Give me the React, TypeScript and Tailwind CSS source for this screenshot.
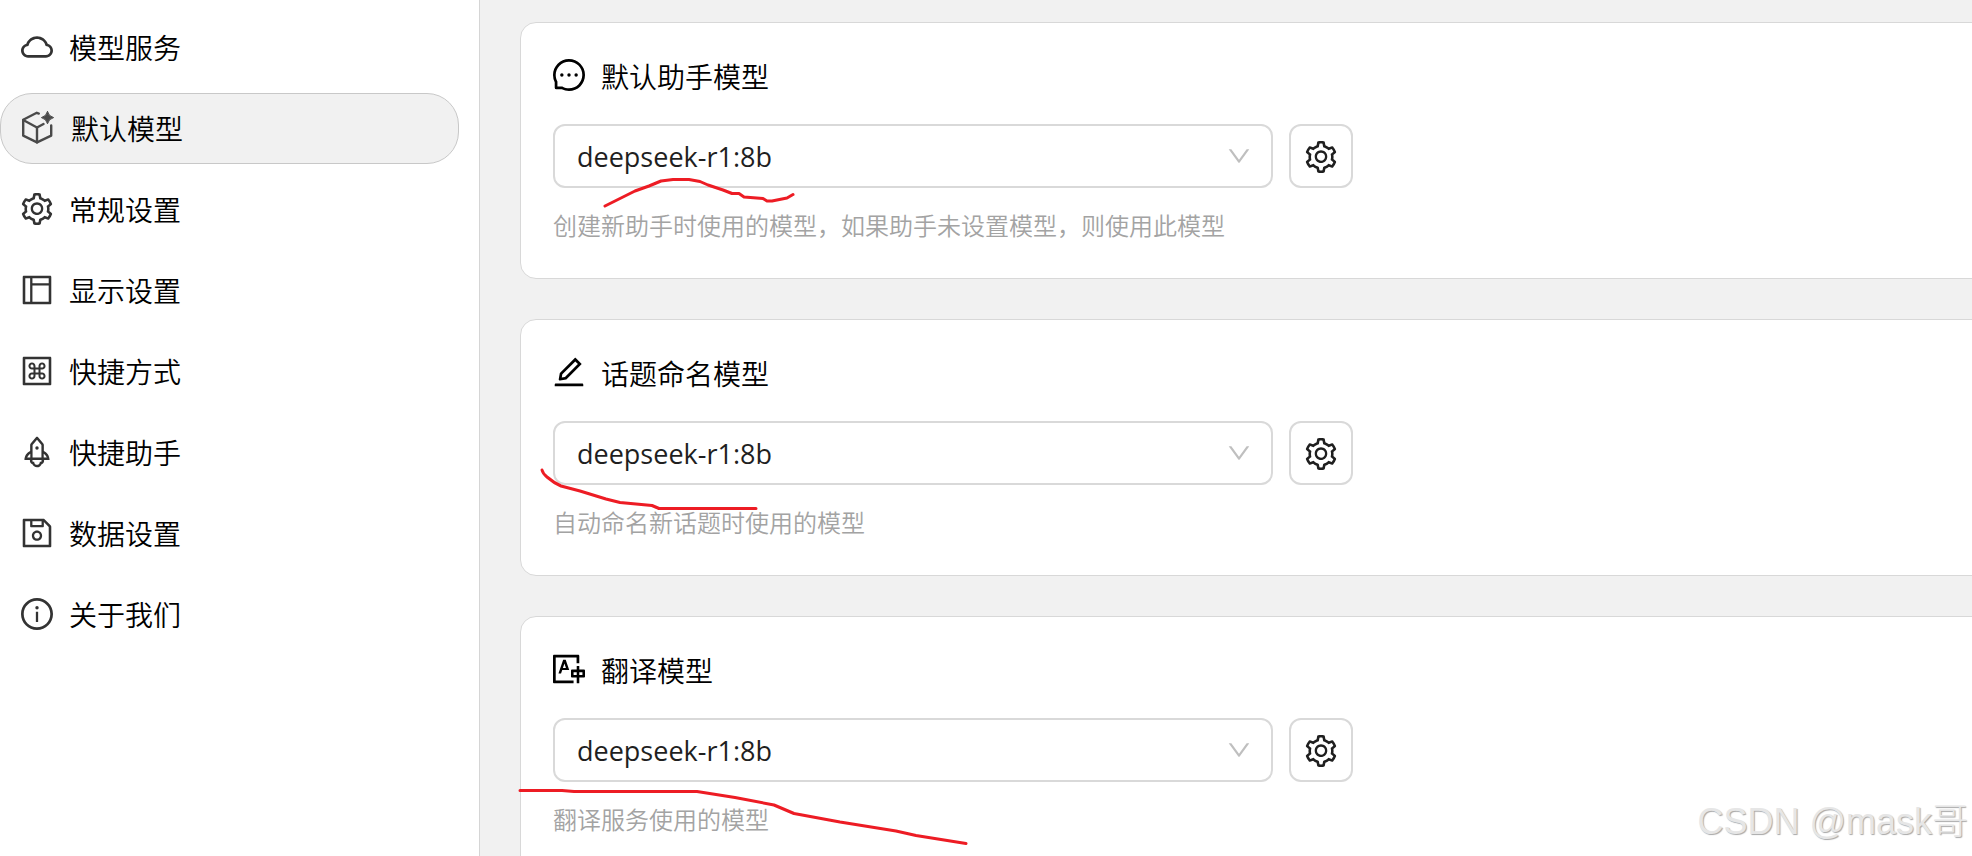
import type { ComponentType, SVGProps } from "react";
import {
  AiOutlineCloud,
  AiOutlineDown,
  AiOutlineEdit,
  AiOutlineInfoCircle,
  AiOutlineLayout,
  AiOutlineMacCommand,
  AiOutlineMessage,
  AiOutlineRocket,
  AiOutlineSave,
  AiOutlineSetting,
  AiOutlineTranslation,
} from "react-icons/ai";

type Icon = ComponentType<SVGProps<SVGSVGElement>>;

const TIGHT = "64 64 896 896";

function PackageSparkle({ className }: SVGProps<SVGSVGElement>) {
  return (
    <svg viewBox="0 0 34 34" className={className} fill="none" stroke="currentColor" strokeWidth="2.4" strokeLinecap="round" strokeLinejoin="round">
      <path d="M17.8 2.6 L15.8 1.8 L2.2 8.8 V24.6 L16 31.4 L30.2 24.6 V14.5" />
      <path d="M2.2 9 L16 16.5 L22.5 13" />
      <path d="M16 16.5 V31.4" />
      <path d="M26.5 0.6 Q27.6 5.4 32.6 6.6 Q27.6 7.8 26.5 12.8 Q25.4 7.8 20.4 6.6 Q25.4 5.4 26.5 0.6Z" fill="currentColor" strokeWidth="1" />
    </svg>
  );
}

const nav: { label: string; icon: Icon; active?: boolean }[] = [
  { label: "模型服务", icon: AiOutlineCloud as Icon },
  { label: "默认模型", icon: PackageSparkle, active: true },
  { label: "常规设置", icon: AiOutlineSetting as Icon },
  { label: "显示设置", icon: AiOutlineLayout as Icon },
  { label: "快捷方式", icon: AiOutlineMacCommand as Icon },
  { label: "快捷助手", icon: AiOutlineRocket as Icon },
  { label: "数据设置", icon: AiOutlineSave as Icon },
  { label: "关于我们", icon: AiOutlineInfoCircle as Icon },
];

const cards: { id: string; title: string; hint: string; icon: Icon; stroke: string; strokeClass: string; box: string }[] = [
  {
    id: "assistant",
    title: "默认助手模型",
    hint: "创建新助手时使用的模型，如果助手未设置模型，则使用此模型",
    icon: AiOutlineMessage as Icon,
    stroke: "M2 28 L32 13 L46 8 L58 3 L70 1.5 H86 L97 3.5 L105 7 L120 12 L129 15.5 H136 L141 19 L160 20.5 L164 23 H169 L184 20 L190 16.5",
    strokeClass: "absolute left-[82px] top-[155px] w-[192px] h-[30px] overflow-visible",
    box: "0 0 192 30",
  },
  {
    id: "topic",
    title: "话题命名模型",
    hint: "自动命名新话题时使用的模型",
    icon: AiOutlineEdit as Icon,
    stroke: "M2 2 Q3 6 7 9 Q14 15 21 18 L40 23 L66 31 L80 34.5 L112 37.5 L119 40.5 H216",
    strokeClass: "absolute left-[19px] top-[148px] w-[220px] h-[44px]",
    box: "0 0 220 44",
  },
  {
    id: "translate",
    title: "翻译模型",
    hint: "翻译服务使用的模型",
    icon: AiOutlineTranslation as Icon,
    stroke: "M2 2.5 H44 L56 3.5 H179 L217 9.5 L256 17 L276 25.5 L322 34 L378 43 L398 47.5 L448 55.5",
    strokeClass: "absolute -left-[3px] top-[171px] w-[450px] h-[58px]",
    box: "0 0 450 58",
  },
];

export default function App() {
  return (
    <div className="relative flex h-screen overflow-hidden bg-[#f1f1f1] font-['Noto_Sans','Noto_Sans_CJK_SC',sans-serif] text-black">
      <nav className="flex w-[480px] shrink-0 flex-col gap-2.5 border-r border-[#d5d5d5] bg-white pt-3 pr-5">
        {nav.map(({ label, icon: ItemIcon, active }) => (
          <a
            key={label}
            href="#"
            aria-current={active ? "page" : undefined}
            className={
              active
                ? "flex h-[71px] items-center gap-4 rounded-[32px] border border-[#c8c8c8] bg-[#f1f1f1] px-5 text-[28px] leading-10 font-[350]"
                : "flex h-[71px] items-center gap-4 rounded-[32px] border border-transparent px-5 text-[28px] leading-10 font-[350]"
            }
          >
            {active ? (
              <ItemIcon className="mb-0.5 size-[34px] shrink-0 text-[#4a4a4a]" />
            ) : (
              <ItemIcon viewBox={TIGHT} className="mb-0.5 size-8 shrink-0 text-[#333333]" />
            )}
            <span>{label}</span>
          </a>
        ))}
      </nav>

      <main className="min-w-0 flex-1 overflow-hidden pt-[22px] pl-10">
        <div className="-mr-5 flex flex-col gap-10">
          {cards.map(({ id, title, hint, icon: TitleIcon, stroke, strokeClass, box }) => (
            <section key={id} className="relative h-[257px] rounded-2xl border border-[#d8d8d8] bg-white px-8 pt-8">
              <h2 className="flex items-center gap-4 text-[28px] leading-11 font-[350]">
                <TitleIcon viewBox={TIGHT} className="mb-1 size-8 shrink-0" />
                <label htmlFor={id}>{title}</label>
              </h2>
              <div className="mt-[25px] flex gap-4">
                <div className="relative w-[720px]">
                  <select
                    id={id}
                    className="h-16 w-full appearance-none rounded-xl border-2 border-[#d9d9d9] bg-white px-[22px] pt-0.5 font-['Open_Sans',sans-serif] text-[27px] leading-10 text-[#1f1f1f]"
                  >
                    <option>deepseek-r1:8b</option>
                  </select>
                  <AiOutlineDown viewBox={TIGHT} className="pointer-events-none absolute top-5 right-[22px] size-6 text-[#bfbfbf]" />
                </div>
                <button
                  type="button"
                  aria-label={title}
                  className="flex size-16 items-center justify-center rounded-xl border-2 border-[#d9d9d9] bg-white pt-0.5 text-[#1f1f1f]"
                >
                  <AiOutlineSetting viewBox={TIGHT} className="size-8" />
                </button>
              </div>
              <p className="mt-5 text-2xl leading-9 font-[350] text-[#a3a3a3]">{hint}</p>
              <svg viewBox={box} className={strokeClass} fill="none" stroke="#ed1c24" strokeWidth="3" strokeLinejoin="round" strokeLinecap="round">
                <path d={stroke} />
              </svg>
            </section>
          ))}
        </div>
      </main>

      <div className="pointer-events-none absolute right-1 bottom-2.5 font-['Liberation_Sans','Noto_Sans_CJK_SC',sans-serif] text-[36px] leading-12 font-light text-[#e6e6e6] [text-shadow:1px_1px_1px_#a8a8a8]">
        CSDN @mask哥
      </div>
    </div>
  );
}
